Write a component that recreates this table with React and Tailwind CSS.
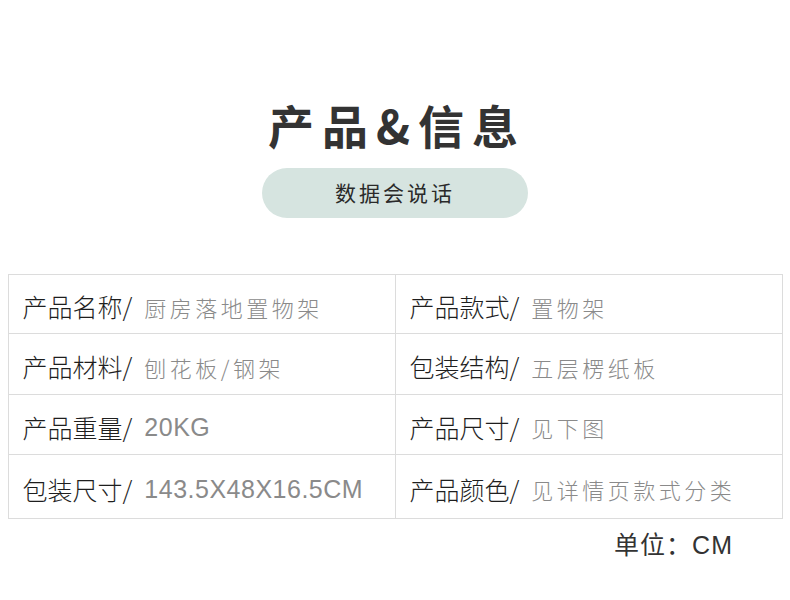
import React from "react";

const rows = [
  [["产品名称/", "厨房落地置物架"], ["产品款式/", "置物架"]],
  [["产品材料/", "刨花板/钢架"], ["包装结构/", "五层楞纸板"]],
  [["产品重量/", "20KG"], ["产品尺寸/", "见下图"]],
  [["包装尺寸/", "143.5X48X16.5CM"], ["产品颜色/", "见详情页款式分类"]],
];
const heights = ["h-[59px]", "h-[61px]", "h-[60px]", "h-[63px]"];
const latinFont = { fontFamily: '"Liberation Sans", "Noto Sans CJK SC", sans-serif' };

function Cell({ label, value, first }) {
  const latin = /^[\x00-\x7F]+$/.test(value);
  return (
    <div className={`flex items-center pl-[14px] pt-[6px] ${first ? "border-r border-[#dcdcdc]" : ""}`}>
      <span className="text-[25px] font-light text-[#1e1e1e]">{label}</span>
      {latin ? (
        <span className="ml-[12px] text-[25px] text-[#8a8a8a] tracking-[0.5px]" style={latinFont}>
          {value}
        </span>
      ) : (
        <span className="ml-[12px] text-[22px] font-light text-[#8a8a8a] tracking-[3.5px]">{value}</span>
      )}
    </div>
  );
}

export default function App() {
  return (
    <div
      className="w-[790px] h-[600px] bg-white flex flex-col items-center"
      style={{ fontFamily: '"Noto Sans CJK SC", "Noto Sans", sans-serif' }}
    >
      <h1 className="mt-[89px] h-[70px] flex items-center text-[46px] font-bold text-[#333] tracking-[8px] leading-none pl-[4px]">
        产品&amp;信息
      </h1>
      <div className="mt-[9px] w-[266px] h-[50px] rounded-full bg-[#d6e4e0] flex items-center justify-center text-[21px] font-normal text-[#2a2a2a] tracking-[3px]">
        数据会说话
      </div>
      <div className="mt-[56px] w-[775px] border border-[#dcdcdc]">
        {rows.map((r, i) => (
          <div
            key={i}
            className={`grid grid-cols-[387px_1fr] ${heights[i]} ${i < rows.length - 1 ? "border-b border-[#dcdcdc]" : ""}`}
          >
            <Cell label={r[0][0]} value={r[0][1]} first />
            <Cell label={r[1][0]} value={r[1][1]} />
          </div>
        ))}
      </div>
      <div className="self-end mr-[57px] mt-[8px] text-[25px] text-[#333] tracking-[1px]" style={latinFont}>
        单位：CM
      </div>
    </div>
  );
}
